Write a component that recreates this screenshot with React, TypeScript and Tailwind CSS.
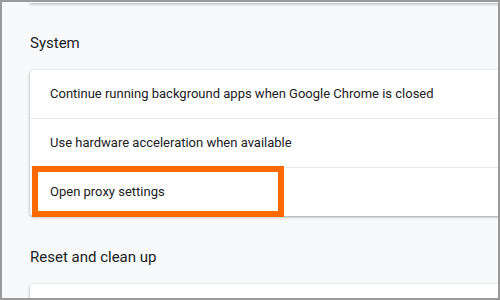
import React from "react";

const font = { fontFamily: "Roboto, 'Liberation Sans', sans-serif" };

function Row({ label, last }: { label: string; last?: boolean }) {
  return (
    <div
      className={`flex items-center pl-[20px] text-[13px] text-[#202124] ${
        last ? "h-[48px]" : "h-[49px] border-b border-[#e8eaed]"
      }`}
    >
      {label}
    </div>
  );
}

export default function App() {
  return (
    <div
      className="h-[300px] w-[500px] overflow-hidden border-2 border-[#9a9a9a] bg-[#f8f9fa]"
      style={font}
    >
      {/* bottom edge of the card above */}
      <div className="ml-[28px] h-[1px] w-[480px] bg-white shadow-[0_1px_2px_0_rgba(60,64,67,0.3),0_1px_3px_1px_rgba(60,64,67,0.15)]" />

      <h2 className="ml-[28px] mt-[30px] text-[15px] leading-[20px] font-normal text-[#202124]">
        System
      </h2>

      <div className="relative ml-[28px] mt-[17px] w-[490px] rounded-[4px] bg-white shadow-[0_1px_2px_0_rgba(60,64,67,0.3),0_1px_3px_1px_rgba(60,64,67,0.15)]">
        <Row label="Continue running background apps when Google Chrome is closed" />
        <Row label="Use hardware acceleration when available" />
        <Row label="Open proxy settings" last />
        {/* highlight */}
        <div className="absolute left-[2px] top-[96px] h-[51px] w-[252px] border-[6px] border-[#ff6a00]" />
      </div>

      <h2 className="ml-[28px] mt-[31px] text-[15px] leading-[20px] font-normal text-[#202124]">
        Reset and clean up
      </h2>

      <div className="ml-[28px] mt-[17px] h-[40px] w-[490px] rounded-[4px] bg-white shadow-[0_1px_2px_0_rgba(60,64,67,0.3),0_1px_3px_1px_rgba(60,64,67,0.15)]" />
    </div>
  );
}
